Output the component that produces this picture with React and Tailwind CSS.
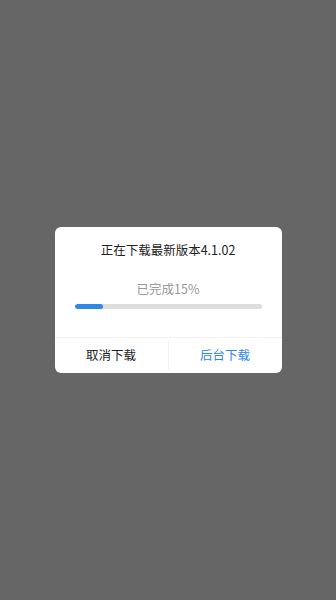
export default function App() {
  const percent = 15.5;

  return (
    <div
      className="h-[600px] w-full bg-[#666666] flex items-center justify-center"
      style={{ fontFamily: '"Noto Sans CJK SC", "Noto Sans", sans-serif' }}
    >
      <div className="w-[227px] bg-white rounded-[6px] overflow-hidden">
        <div className="pt-[14px] text-center text-[12.5px] leading-[18px] text-[#222222]">
          正在下载最新版本4.1.02
        </div>
        <div className="mt-[21px] text-center text-[12.5px] leading-[18px] text-[#999999]">
          已完成15%
        </div>
        <div className="mx-[20px] mt-[6px] h-[5px] rounded-full bg-[#dddddd] overflow-hidden">
          <div
            className="h-full rounded-full bg-[#2f87e6]"
            style={{ width: `${percent}%` }}
          />
        </div>
        <div className="mt-[28px] border-t border-[#f0f0f0] flex h-[36px]">
          <button className="flex-1 text-[12.5px] text-[#222222] flex items-center justify-center">
            取消下载
          </button>
          <div className="w-px bg-[#f2f2f2] my-[3px]" />
          <button className="flex-1 text-[12.5px] text-[#2f87e6] flex items-center justify-center">
            后台下载
          </button>
        </div>
      </div>
    </div>
  );
}
